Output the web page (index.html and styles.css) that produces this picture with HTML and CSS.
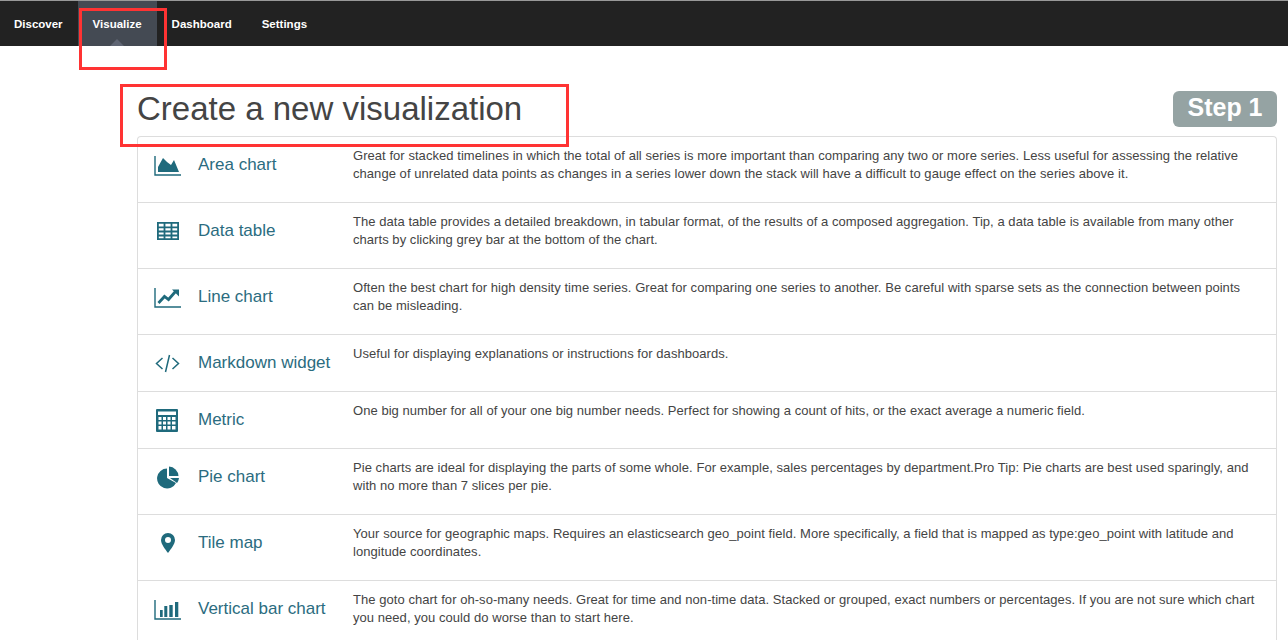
FILE: index.html
```html
<!DOCTYPE html>
<html lang="en">
<head>
<meta charset="utf-8">
<title>Create a new visualization</title>
<link rel="stylesheet" href="styles.css">
</head>
<body>
<nav class="navbar">
  <a class="nav-link">Discover</a>
  <a class="nav-link active">Visualize</a>
  <a class="nav-link">Dashboard</a>
  <a class="nav-link">Settings</a>
</nav>
<main class="page">
  <header class="page-head">
    <h1 class="title">Create a new visualization</h1>
    <div class="step">Step 1</div>
  </header>
  <ul class="list">
    <li class="row">
      <div class="label">
        <svg class="icon" viewBox="0 0 28 24"><path d="M1 3v19h26" fill="none" stroke="currentColor" stroke-width="1.400"/><path d="M4 19v-5l5-9 4 4 4 3 3-5 5 12z" fill="currentColor"/></svg>
        <span>Area chart</span>
      </div>
      <p class="desc">Great for stacked timelines in which the total of all series is more important than comparing any two or more series. Less useful for assessing the relative change of unrelated data points as changes in a series lower down the stack will have a difficult to gauge effect on the series above it.</p>
    </li>
    <li class="row">
      <div class="label">
        <svg class="icon" viewBox="0 0 28 24"><path d="M3.900 3.900h20.200v16.200H3.900zM3.900 8.300h20.200M3.900 12.500h20.200M3.900 16.500h20.200M10.500 4v16M17.500 4v16" fill="none" stroke="currentColor" stroke-width="1.800"/></svg>
        <span>Data table</span>
      </div>
      <p class="desc">The data table provides a detailed breakdown, in tabular format, of the results of a composed aggregation. Tip, a data table is available from many other charts by clicking grey bar at the bottom of the chart.</p>
    </li>
    <li class="row">
      <div class="label">
        <svg class="icon" viewBox="0 0 28 24"><path d="M1 3v19h26" fill="none" stroke="currentColor" stroke-width="1.400"/><path d="M4.500 18l6-6.500 4 3 7-8" fill="none" stroke="currentColor" stroke-width="2.800"/><path d="M18 4.500h7v7z" fill="currentColor"/></svg>
        <span>Line chart</span>
      </div>
      <p class="desc">Often the best chart for high density time series. Great for comparing one series to another. Be careful with sparse sets as the connection between points can be misleading.</p>
    </li>
    <li class="row">
      <div class="label">
        <svg class="icon" viewBox="0 0 28 24"><path d="M8.500 7l-6 5.500 6 5.500M18.500 7l6 5.500-6 5.500M15.500 4l-4 17" fill="none" stroke="currentColor" stroke-width="1.500"/></svg>
        <span>Markdown widget</span>
      </div>
      <p class="desc">Useful for displaying explanations or instructions for dashboards.</p>
    </li>
    <li class="row">
      <div class="label">
        <svg class="icon" viewBox="0 0 28 24"><path d="M3 1h20a1 1 0 0 1 1 1v21a1 1 0 0 1-1 1H3a1 1 0 0 1-1-1V2a1 1 0 0 1 1-1z" fill="currentColor"/><path d="M4 3.500h18v3.500H4z" fill="#fff"/><path d="M4.500 9h3v3h-3zM9 9h3v3H9zM13.500 9h3v3h-3zM18 9h3.500v3H18zM4.500 13.500h3v3h-3zM9 13.500h3v3H9zM13.500 13.500h3v3h-3zM18 13.500h3.500v3H18zM4.500 18h3v3.500h-3zM9 18h3v3.500H9zM13.500 18h3v3.500h-3zM18 18h3.500v3.500H18z" fill="#fff"/></svg>
        <span>Metric</span>
      </div>
      <p class="desc">One big number for all of your one big number needs. Perfect for showing a count of hits, or the exact average a numeric field.</p>
    </li>
    <li class="row">
      <div class="label">
        <svg class="icon" viewBox="0 0 28 24"><path d="M13 3.500A10 10 0 1 0 22 18l-9-5z" fill="currentColor"/><path d="M15 1.500a10 10 0 0 1 9.500 9.500H15z" fill="currentColor"/><path d="M16 13h9a11 11 0 0 1-2 5z" fill="currentColor"/></svg>
        <span>Pie chart</span>
      </div>
      <p class="desc">Pie charts are ideal for displaying the parts of some whole. For example, sales percentages by department.Pro Tip: Pie charts are best used sparingly, and with no more than 7 slices per pie.</p>
    </li>
    <li class="row">
      <div class="label">
        <svg class="icon" viewBox="0 0 28 24"><path fill-rule="evenodd" d="M14 2a7 7 0 0 1 7 7c0 4-4 9-7 13-3-4-7-9-7-13a7 7 0 0 1 7-7zm0 4a3 3 0 1 0 0 6 3 3 0 0 0 0-6z" fill="currentColor"/></svg>
        <span>Tile map</span>
      </div>
      <p class="desc">Your source for geographic maps. Requires an elasticsearch geo_point field. More specifically, a field that is mapped as type:geo_point with latitude and longitude coordinates.</p>
    </li>
    <li class="row">
      <div class="label">
        <svg class="icon" viewBox="0 0 28 24"><path d="M1 3v19h26" fill="none" stroke="currentColor" stroke-width="1.400"/><path d="M6 13h2.700v7H6zM10.300 9h3v11h-3zM15.300 8h3.400v12h-3.400zM21 5h3.300v15H21z" fill="currentColor"/></svg>
        <span>Vertical bar chart</span>
      </div>
      <p class="desc">The goto chart for oh-so-many needs. Great for time and non-time data. Stacked or grouped, exact numbers or percentages. If you are not sure which chart you need, you could do worse than to start here.</p>
    </li>
  </ul>
</main>
<div class="mark mark-nav"></div>
<div class="mark mark-title"></div>
</body>
</html>
```
FILE: styles.css
```css
* { box-sizing: border-box; }
html, body { margin: 0; height: 640px; overflow: hidden; background: #fff; }
body { font-family: "Liberation Sans", Arial, sans-serif; color: #444; }

.navbar { display: flex; height: 46px; background: #222; border-top: 1px solid #999; padding-left: 14px; }
.nav-link { position: relative; display: block; padding: 16px 15px 0; font-size: 11.5px; line-height: 14px; font-weight: bold; color: #fff; }
.nav-link:first-child { padding-left: 0; }
.nav-link.active { background: #444a53; }
.nav-link.active::after { content: ""; position: absolute; left: 50%; bottom: 0; margin-left: -7px; border: 7px solid transparent; border-top: 0; border-bottom-color: #5f6573; }

.page { padding: 0 11px 0 137px; }
.page-head { display: flex; justify-content: space-between; align-items: flex-start; height: 90px; padding-top: 45px; }
.title { margin: 0; font-size: 33px; line-height: 36px; font-weight: normal; color: #444; }
.step { background: #95a3a3; color: #fff; font-size: 25px; font-weight: bold; line-height: 33px; height: 36px; width: 104px; text-align: center; border-radius: 6px; }

.list { margin: 0; padding: 0; list-style: none; border: 1px solid #ddd; border-bottom: 0; border-radius: 4px 4px 0 0; }
.row { display: flex; align-items: flex-start; padding: 0 15px 0 16px; border-bottom: 1px solid #ddd; }
.label { display: flex; align-items: center; flex: 0 0 199px; height: 56px; color: #2b6c80; font-size: 17px; line-height: 24px; }
.icon { flex: none; width: 28px; height: 24px; margin-right: 16px; color: #1f6a7c; }
.desc { margin: 0; flex: 1; padding: 10px 0 19px; font-size: 13px; letter-spacing: 0.05px; line-height: 18px; color: #444; }

.mark { position: absolute; border: 3px solid #f33; }
.mark-nav { left: 79px; top: 8px; width: 88px; height: 62px; }
.mark-title { left: 120px; top: 84px; width: 449px; height: 63px; }
```
